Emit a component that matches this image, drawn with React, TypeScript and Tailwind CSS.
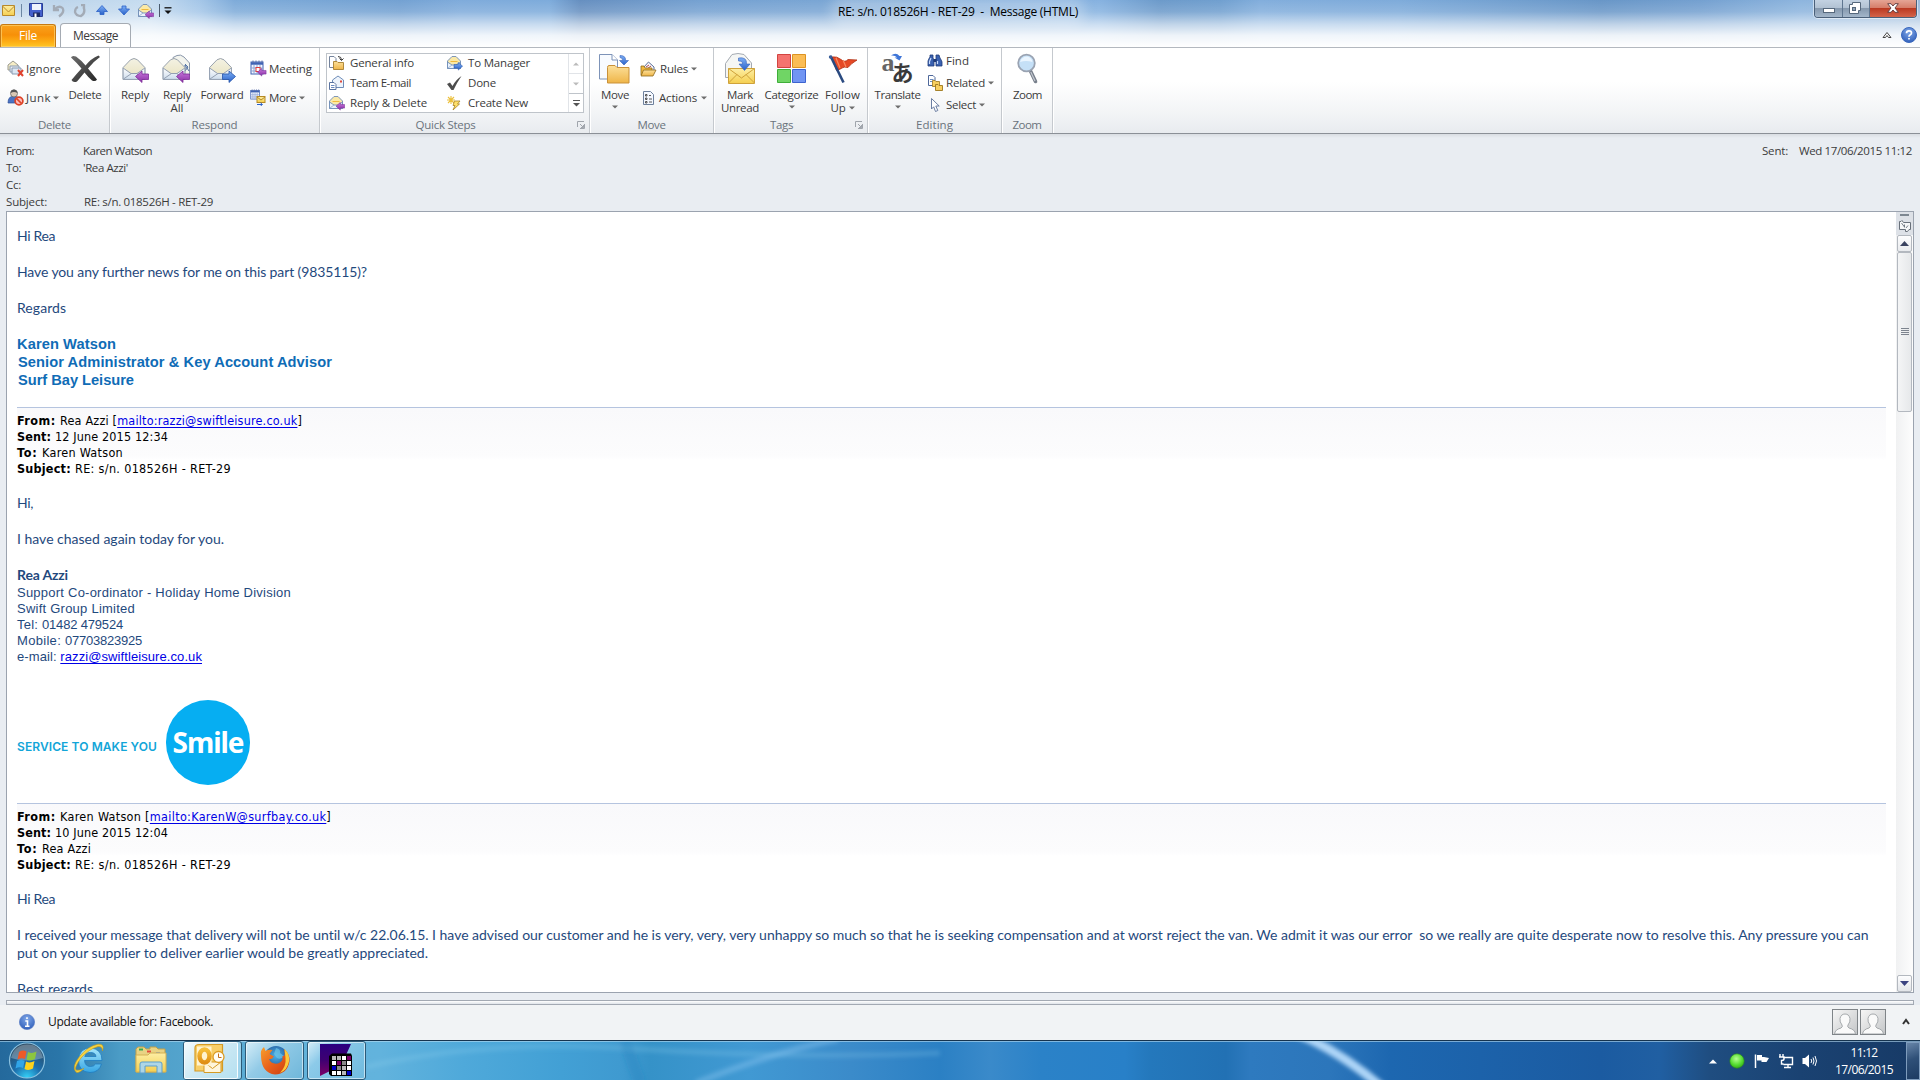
import React, { useLayoutEffect, useRef, useState } from "react";

/* Text whose tracking is adjusted so that the line takes exactly `w` pixels. */
function Fit({ w, className = "", children }: { w: number; className?: string; children: React.ReactNode }) {
  const ref = useRef<HTMLSpanElement>(null);
  const [gap, setGap] = useState(0);
  useLayoutEffect(() => {
    const el = ref.current;
    if (!el) return;
    el.style.letterSpacing = "0px";
    const natural = el.getBoundingClientRect().width;
    const n = (el.textContent || "").length || 1;
    const g = (w - natural) / n;
    el.style.letterSpacing = g + "px";
    setGap(g);
  }, [w]);
  return (
    <span ref={ref} className={"inline-block whitespace-pre " + className} style={{ letterSpacing: gap }}>
      {children}
    </span>
  );
}

const Svg = ({ w, h, vb, className = "", children }: { w: number; h: number; vb?: string; className?: string; children: React.ReactNode }) => (
  <svg width={w} height={h} viewBox={vb || `0 0 ${w} ${h}`} className={"block shrink-0 " + className} fill="none">
    {children}
  </svg>
);

const Defs = () => (
  <svg width="0" height="0" className="absolute">
    <defs>
      <linearGradient id="gFolder" x1="0" y1="0" x2="0" y2="1"><stop offset="0" stopColor="#fce09a" /><stop offset="1" stopColor="#efb548" /></linearGradient>
      <linearGradient id="gBlue" x1="0" y1="0" x2="0" y2="1"><stop offset="0" stopColor="#7fb0f5" /><stop offset="1" stopColor="#2a62c9" /></linearGradient>
      <linearGradient id="gPurple" x1="0" y1="0" x2="0" y2="1"><stop offset="0" stopColor="#c878dc" /><stop offset="1" stopColor="#8a2fa6" /></linearGradient>
      <linearGradient id="gEnv" x1="0" y1="0" x2="0" y2="1"><stop offset="0" stopColor="#ffffff" /><stop offset="1" stopColor="#cddcec" /></linearGradient>
      <linearGradient id="gPaper" x1="0" y1="0" x2="0" y2="1"><stop offset="0" stopColor="#f4f2e4" /><stop offset="1" stopColor="#e8e2bd" /></linearGradient>
      <linearGradient id="gYellow" x1="0" y1="0" x2="0" y2="1"><stop offset="0" stopColor="#fdeea4" /><stop offset="1" stopColor="#f5cf50" /></linearGradient>
      <linearGradient id="gX" x1="0" y1="0" x2="1" y2="1"><stop offset="0" stopColor="#6e6e6e" /><stop offset="1" stopColor="#222" /></linearGradient>
      <radialGradient id="gOrb" cx=".5" cy="1" r=".9"><stop offset="0" stopColor="#35d5fa" /><stop offset=".45" stopColor="#1b6fae" /><stop offset="1" stopColor="#2b4c66" /></radialGradient>
      <radialGradient id="gGreen" cx=".45" cy=".35" r=".7"><stop offset="0" stopColor="#b6ff92" /><stop offset=".6" stopColor="#55dc30" /><stop offset="1" stopColor="#2fa517" /></radialGradient>
      <radialGradient id="gHelp" cx=".5" cy=".3" r=".8"><stop offset="0" stopColor="#7fa7e8" /><stop offset="1" stopColor="#2757b5" /></radialGradient>
      <radialGradient id="gGlobe" cx=".5" cy=".4" r=".7"><stop offset="0" stopColor="#4fb3e8" /><stop offset="1" stopColor="#143f86" /></radialGradient>
      <linearGradient id="gFox" x1="0" y1="0" x2="1" y2="1"><stop offset="0" stopColor="#f8a02c" /><stop offset=".5" stopColor="#e8611c" /><stop offset="1" stopColor="#c93a10" /></linearGradient>
      <linearGradient id="gIe" x1="0" y1="0" x2="0" y2="1"><stop offset="0" stopColor="#a5e6fb" /><stop offset="1" stopColor="#35a5e4" /></linearGradient>
      <linearGradient id="gOut" x1="0" y1="0" x2="0" y2="1"><stop offset="0" stopColor="#f6bf3a" /><stop offset="1" stopColor="#e08f14" /></linearGradient>
      <linearGradient id="gApp" x1="0" y1="0" x2="0" y2="1"><stop offset="0" stopColor="#2b0080" /><stop offset=".5" stopColor="#3e0072" /><stop offset="1" stopColor="#7c0066" /></linearGradient>
    </defs>
  </svg>
);

const Caret = ({ className = "" }) => (
  <Svg w={6} h={4} className={className}><path d="M0 .5H6L3 3.5Z" fill="#6d6d6d" /></Svg>
);

/* 24x24 opened envelope, drawn at the origin */
const EnvShape = () => (
  <>
    <path d="M.6 10.500 8 2.800Q11.500.2 15 2.800L22.400 10.500V22.400H.6Z" fill="url(#gPaper)" stroke="#9aa3ad" strokeWidth="1" />
    <path d="M.6 11 8.500 16.500H14.500L22.400 11V22.400H.6Z" fill="url(#gEnv)" stroke="#94a0b2" strokeWidth="1" />
    <path d="M1 22 9 16.500M22 22 14 16.500" stroke="#94a0b2" strokeWidth="1" />
  </>
);
const ArrL = ({ x = 0, y = 0, s = 1 }) => (
  <path transform={`translate(${x} ${y}) scale(${s})`} d="M0 5.5 6.5 0V3H13V8.5H6.5V11.5Z" fill="url(#gPurple)" stroke="#7c2c98" strokeWidth=".8" />
);
const ArrR = ({ x = 0, y = 0, s = 1 }) => (
  <path transform={`translate(${x} ${y}) scale(${s})`} d="M13 5.5 6.5 0V3H0V8.5H6.5V11.5Z" fill="url(#gBlue)" stroke="#2553a8" strokeWidth=".8" />
);

const IReply = () => <Svg w={32} h={32}><g transform="translate(3.5 4)"><EnvShape /></g><ArrL x={16.5} y={18} /></Svg>;
const IReplyAll = () => (
  <Svg w={32} h={32}>
    <path d="M12 4.500 16 2.500Q19.500 1 23 4L28.500 10V22H14Z" fill="#f3f4ee" stroke="#8a97ab" />
    <path d="M24 11 27 14 24 18V12L28 18" stroke="#5776a6" strokeWidth="1" />
    <g transform="translate(1.5 4)"><EnvShape /></g><ArrL x={15.5} y={18} />
  </Svg>
);
const IForward = () => <Svg w={32} h={32}><g transform="translate(3 4)"><EnvShape /></g><ArrR x={16.5} y={18} /></Svg>;
const IDelete = () => (
  <Svg w={32} h={32}>
    <path d="M2 4.500Q3 2 7 3.500 12 7 16.500 12.500 22 5.500 29.500 2.500L31 4Q24.500 8.500 19 15.500 24 21.500 28 26.500 26.500 29 23 27.500 19 24 15.500 19.500 11 25 8 28.500 4 30 2.500 27 7 21.500 12.500 15.500 7 9 2 4.500Z" fill="url(#gX)" />
  </Svg>
);
const IIgnore = () => (
  <Svg w={17} h={17}>
    <path d="M1 5 6 1 11 5V10H1Z" fill="#f6edc6" stroke="#9a9a90" /><path d="M3 6H12V12H3Z" fill="#e9eff6" stroke="#8a9ab0" />
    <path d="M5 8H14V14H5Z" fill="#dbe6f3" stroke="#8a9ab0" /><path d="M11 10 16 16M16 10 11 16" stroke="#e0432f" strokeWidth="2" />
  </Svg>
);
const IJunk = () => (
  <Svg w={17} h={17}>
    <path d="M1 14Q1 7 7 7T12 14Z" fill="#4a73c4" stroke="#2b4e96" strokeWidth=".7" />
    <circle cx="7" cy="4.500" r="3.500" fill="#d9c8b4" stroke="#666" strokeWidth=".8" /><path d="M3.500 4Q4 .5 7 .6T10.500 4Q7 2 3.500 4Z" fill="#555" />
    <circle cx="12" cy="12" r="3.900" fill="#fbb" stroke="#dc4326" strokeWidth="1.700" /><path d="M9.500 9.500 14.500 14.500" stroke="#dc4326" strokeWidth="1.700" />
  </Svg>
);
const Cal = () => (
  <>
    <rect x="1" y="2" width="12" height="12" fill="#f4f8ff" stroke="#3f63b4" />
    <path d="M1 3.500H13" stroke="#3f63b4" strokeWidth="2.500" />
    <path d="M4 5V14M7 5V14M10 5V14M1 8H13M1 11H13" stroke="#8fa5d4" strokeWidth="1" />
    <path d="M3 .5V3M6 .5V3M9 .5V3M12 .5V3" stroke="#5a6fa8" />
  </>
);
const IMeeting = () => <Svg w={17} h={17}><Cal /><rect x="6" y="7.500" width="4" height="4" fill="#fff" stroke="#e03b3b" /><ArrL x={7.5} y={8.5} s={0.66} /></Svg>;
const IMore = () => (
  <Svg w={16} h={17}>
    <g transform="scale(.72)"><Cal /></g><rect x="7" y="7.500" width="8" height="6" fill="url(#gYellow)" stroke="#b58a26" /><path d="M7 8 11 11 15 8" stroke="#b58a26" />
    <path d="M7 15.500H12M10.500 13.800 12.500 15.500 10.500 17" stroke="#2a62c9" />
  </Svg>
);
const SmEnv = () => (
  <>
    <path d="M1.500 6 6 1.500H10L14.500 6V13.500H1.500Z" fill="#fbe9a6" stroke="#7f97b8" />
    <path d="M1.500 7 6 10H10L14.500 7V13.500H1.500Z" fill="#eaf2fb" stroke="#6f8db8" strokeWidth=".9" />
    <path d="M2 13 6 10M14 13 10 10" stroke="#8fa8cc" strokeWidth=".8" />
    <path d="M4.500 6.500H11.500" stroke="#f0b93c" />
  </>
);
const IGeneral = () => (
  <Svg w={17} h={16}><path d="M1.500 1.500H6L8 3.500V12.500H1.500Z" fill="#fff" stroke="#74839c" /><path d="M5.500 14.500V6.500H9L10 7.500H15.500V14.500Z" fill="url(#gFolder)" stroke="#a8802f" strokeWidth=".9" /><path d="M10 1.500Q13.500 1.500 13.500 5M11.500 3.500 13.500 5.500 15.500 3.500" stroke="#333" /></Svg>
);
const ITeam = () => (
  <Svg w={17} h={16}><path d="M4.500 5 10 1 15.500 5V12.500H4.500Z" fill="#eef4fc" stroke="#6f8db8" /><rect x="12" y="5.500" width="2" height="2" fill="#e04a3a" /><path d="M1.500 7.500H6L8 9.500V14.500H1.500Z" fill="#fff" stroke="#5a73a0" /><path d="M3 10.500H6.500M3 12.500H6.500" stroke="#6c8cc0" /></Svg>
);
const IReplyDel = () => <Svg w={17} h={16}><SmEnv /><ArrL x={8} y={7.5} s={0.66} /></Svg>;
const IToMgr = () => <Svg w={17} h={16}><SmEnv /><ArrR x={8} y={7.5} s={0.66} /></Svg>;
const IDone = () => <Svg w={17} h={16}><path d="M1 9 4 7.500 6.500 11Q10 4.500 15.500 1 11 7.500 7.500 15H5.500Z" fill="#4c4c4c" /></Svg>;
const ICreate = () => (
  <Svg w={17} h={16}><path d="M5 1V9M1 5H9M2 2 8 8M8 2 2 8" stroke="#ecc03c" strokeWidth="1.100" /><path d="M8.500 6H14L11.500 9H13.500L7 15 9 10.500H7Z" fill="#ffe06a" stroke="#a98322" strokeWidth=".8" /></Svg>
);
const IMove = () => (
  <Svg w={34} h={34}>
    <path d="M1.500 1.500H14L19.500 7V26H1.500Z" fill="#f8fbff" stroke="#7d93b8" /><path d="M14 1.500V7H19.500" fill="#fff" stroke="#7d93b8" />
    <path d="M9.500 30V14.500Q9.500 12.500 11 12.500H17L19 14.500H31V30Z" fill="url(#gFolder)" stroke="#c9913a" />
    <path d="M22 2.500Q28 2.500 27.500 7.500H30.500L26 12 21.500 7.500H24.500Q25 5 22 4.500Z" fill="url(#gBlue)" stroke="#3562bb" strokeWidth=".6" />
  </Svg>
);
const IRules = () => (
  <Svg w={17} h={16}><path d="M3 7 8.500 1 14 6V12H3Z" fill="#f6f6fb" stroke="#5a6e96" /><path d="M6 6 9 4M7 8 11 5" stroke="#b04a4a" /><path d="M1 5H4L5 7H12V14H1Z" fill="#f2b93f" stroke="#8e6a1d" strokeWidth=".8" /><path d="M3.500 9H16L13 15H1Z" fill="url(#gFolder)" stroke="#8e6a1d" strokeWidth=".8" /></Svg>
);
const IActions = () => (
  <Svg w={13} h={16}><path d="M1.500 1.500H8.500L11.500 4.500V14.500H1.500Z" fill="#f4f8ff" stroke="#6d809c" /><path d="M3.500 4.500H5V6H3.500ZM3.500 8H5V9.500H3.500ZM3.500 11.500H5V13H3.500ZM7 5.500H9M7 9H10M7 12H10" stroke="#444" strokeWidth=".9" /></Svg>
);
const IMark = () => (
  <Svg w={32} h={32}>
    <path d="M1.500 10.500 8 1.500Q14 -.5 20 1.500L27.500 10V24.500H1.500Z" fill="#f5f6f4" stroke="#a4aab2" />
    <path d="M4.500 15.500H30.500V30.500H4.500Z" fill="url(#gYellow)" stroke="#cfa23a" /><path d="M4.500 15.500 17.500 25 30.500 15.500M4.500 30 13 21.500M30.500 30 22 21.500" stroke="#cfa23a" />
    <path d="M14.500 5Q23 3.500 22.500 11H26L20.500 17.500 15 11H18.500Q19 8 14.500 8Z" fill="url(#gBlue)" stroke="#3562bb" strokeWidth=".6" />
  </Svg>
);
const ICat = () => (
  <Svg w={32} h={32}>
    <path d="M1.500 1.500H14.500V14.500H1.500Z" fill="#f4736f" stroke="#d24440" /><path d="M16.500 1.500H29.500V14.500H16.500Z" fill="#fbbd55" stroke="#dc9322" />
    <path d="M1.500 16.500H14.500V29.500H1.500Z" fill="#70d565" stroke="#3fae3a" /><path d="M16.500 16.500H29.500V29.500H16.500Z" fill="#7195f3" stroke="#3d63cf" />
  </Svg>
);
const IFlag = () => (
  <Svg w={32} h={32}>
    <path d="M4.500 4Q10 3 14 6.500T21 6.500L30 7Q24 10.500 21 14.500 17 13.500 15 15T9.500 17.500Z" fill="#e64a26" stroke="#b02f12" strokeWidth=".8" />
    <path d="M9 5 13 15M16 7 19 14" stroke="#f98a62" strokeWidth="1.200" />
    <path d="M3.500 3 16.500 29.500" stroke="#2a4a80" strokeWidth="2.600" /><circle cx="3.500" cy="4" r="1.700" fill="#3a5d98" />
  </Svg>
);
const ITranslate = () => (
  <div className="relative h-8 w-8 overflow-visible">
    <span className="absolute -top-[6px] left-0 font-['Liberation_Serif',serif] text-[26px] leading-[32px] font-bold text-[#666]">a</span>
    <span className="absolute top-[5px] left-[10px] font-['Noto_Sans_CJK_JP',sans-serif] text-[22px] leading-[26px] font-bold text-[#3a3a3a]">あ</span>
    <Svg w={12} h={8} className="absolute top-0 left-[9px]"><path d="M0 2.500Q5-1 8.500 3H11L8.500 7.500 3.500 4.500H6Q4 2 0 2.500Z" fill="#3f76d8" /></Svg>
  </div>
);
const IFind = () => (
  <Svg w={16} h={16}><path d="M3 2H6V5L7 7V13H1V8Q2 5 3 4ZM9 2H12L13 5Q15 8 15 9V13H9V7Z" fill="#3a61b0" stroke="#1f3b78" strokeWidth=".8" /><path d="M6.500 6H9.500V9H6.500Z" fill="#1f3b78" /><path d="M2.500 11V8.500L4 5M10.500 11V8" stroke="#c9dcff" strokeWidth="1.200" /></Svg>
);
const IRelated = () => (
  <Svg w={16} h={16}><path d="M1.500 .5H6L8 2.500V10.500H1.500Z" fill="#fff" stroke="#4f689a" /><path d="M3 4.500H6.500M3 6.500H6.500" stroke="#6c8cc0" /><path d="M5.500 5.500H8L9 6.500H12.500V11.500H5.500Z" fill="#f8cf5e" stroke="#9c761c" strokeWidth=".8" /><path d="M8.500 9.500H11L12 10.500H15.500V15.500H8.500Z" fill="#f8cf5e" stroke="#9c761c" strokeWidth=".9" /></Svg>
);
const ISelect = () => <Svg w={16} h={16}><path d="M4.500 1.500V12L6.700 9.800 8.500 14.500 10.800 13.500 8.800 9H12.200Z" fill="#fff" stroke="#5b7199" strokeWidth=".9" /></Svg>;
const IZoom = () => (
  <Svg w={32} h={32}>
    <path d="M18.500 18 23.500 28.500" stroke="#777f8b" strokeWidth="3.600" strokeLinecap="round" /><path d="M18.800 19 23 28" stroke="#c3c8d0" strokeWidth="1.200" />
    <circle cx="14.500" cy="10" r="8.300" fill="#c5e0f7" stroke="#9aa3b2" strokeWidth="1.800" /><path d="M8 9Q10 3 16 3.500 20 5 20.500 9 14 7 8 9Z" fill="#eaf5ff" />
  </Svg>
);
const Launcher = () => <Svg w={8} h={8}><path d="M.5 6V.5H7M7.500 3V7.500H3M3 3 6.500 6.500M6.500 4V6.500H4" stroke="#a0a5ac" /></Svg>;

function Big({ w, icon, children }: { w: string; icon: React.ReactNode; children: React.ReactNode }) {
  return (
    <div className={"flex shrink-0 flex-col items-center pt-[5px] " + w}>
      <div className="flex h-[35px] items-start">{icon}</div>
      <div className="flex flex-col items-center leading-[13px]">{children}</div>
    </div>
  );
}
function Row({ icon, w, label, caret, h = "h-[29px]", gap = "gap-[3px]" }: { icon: React.ReactNode; w: number; label: string; caret?: boolean; h?: string; gap?: string }) {
  return (
    <div className={`flex items-center ${h} ${gap}`}>
      {icon}
      <Fit w={w}>{label}</Fit>
      {caret && <Caret />}
    </div>
  );
}
function Group({ w, label, lw, launcher, labelShift = "", children }: { w: string; label: string; lw: number; launcher?: boolean; labelShift?: string; children: React.ReactNode }) {
  return (
    <div className={"relative flex h-[85px] shrink-0 flex-col border-r border-[#c5c9ce] shadow-[1px_0_0_#fff] " + w}>
      <div className="flex h-[68px]">{children}</div>
      <div className={"flex h-[17px] items-center justify-center text-[#6a737c] " + labelShift}><Fit w={lw}>{label}</Fit></div>
      {launcher && <div className="absolute right-[4px] bottom-[4px]"><Launcher /></div>}
    </div>
  );
}

const QS = [
  [{ i: <IGeneral />, t: "General info", w: 64 }, { i: <ITeam />, t: "Team E-mail", w: 61 }, { i: <IReplyDel />, t: "Reply & Delete", w: 77 }],
  [{ i: <IToMgr />, t: "To Manager", w: 62 }, { i: <IDone />, t: "Done", w: 28 }, { i: <ICreate />, t: "Create New", w: 60 }],
];

function TitleBar() {
  return (
    <div className="relative flex h-[47px] flex-col bg-[linear-gradient(180deg,rgba(255,255,255,0)_0%,rgba(255,255,255,.14)_25%,rgba(255,255,255,.58)_52%,rgba(255,255,255,.88)_75%,#fff_100%),linear-gradient(90deg,#c3d8ec_0px,#bdd5eb_60px,#c6dcf0_150px,#a4c6e8_200px,#7eabd9_235px,#73a1d2_400px,#7fabdb_460px,#7dabdb_550px,#668fc0_580px,#75a1d1_700px,#7ca8d6_900px,#86b2e0_1100px,#6c9aca_1160px,#709fcf_1220px,#82aedc_1260px,#7eabda_1400px,#6896c7_1600px,#74a0d0_1700px,#8db5de_1800px,#9bbadb_1920px)]">
      <div className="flex h-[24px] items-center">
        <div className="flex w-[190px] items-center pb-[2px]">
          <Svg w={14} h={12} className="ml-[2px]"><path d="M.5.5H12.500V10.500H.5Z" fill="url(#gYellow)" stroke="#b8892b" /><path d="M.5 1 6.500 7 12.500 1" stroke="#b8892b" /></Svg>
          <span className="ml-[5px] h-[13px] w-px bg-[#6d87a3]" />
          <Svg w={15} h={15} className="ml-[7px]"><path d="M.5.5H13.500V13.500H2L.5 12Z" fill="#4460cc" stroke="#2a3f94" /><path d="M3 1H12V7H3Z" fill="#eef3fc" /><path d="M4 9.500H11V14H4Z" fill="#1c2a66" /><path d="M5.500 10.500H7.500V14H5.500Z" fill="#fff" /></Svg>
          <Svg w={14} h={14} className="ml-[8px]"><path d="M2 1V6H7M2.500 5.500Q7 1 10.500 4 13 8 7 12.500" stroke="#a3abb6" strokeWidth="2.300" /></Svg>
          <Svg w={14} h={14} className="ml-[7px]"><path d="M8 1H11V5M10.500 3Q13 9 8 12 3 12 2 8 2 4 5 3" stroke="#a3abb6" strokeWidth="2.300" /></Svg>
          <Svg w={12} h={11} className="ml-[9px]"><path d="M6 .5 11.500 6.500H8V9.500H4V6.500H.5Z" fill="url(#gBlue)" stroke="#2a5fc8" strokeWidth=".8" /></Svg>
          <Svg w={12} h={11} className="ml-[10px]"><path d="M6 10 11.500 4H8V1H4V4H.5Z" fill="url(#gBlue)" stroke="#2a5fc8" strokeWidth=".8" /></Svg>
          <Svg w={17} h={16} className="ml-[7px]"><SmEnv /><ArrL x={8} y={8} s={0.66} /></Svg>
          <span className="ml-[5px] h-[13px] w-px bg-[#4a5a6c]" />
          <Svg w={8} h={8} className="ml-[4px]"><path d="M.5 .8H7.500" stroke="#111" strokeWidth="1.300" /><path d="M.5 3.500H7.500L4 7Z" fill="#111" /></Svg>
        </div>
        <div className="flex w-[1536px] justify-center">
          <span className="rounded-full bg-white/25 text-black shadow-[0_0_12px_8px_rgba(255,255,255,.25)]">
            <Fit w={240} className="text-[12px] leading-[14px]">RE: s/n. 018526H - RET-29  -  Message (HTML)</Fit>
          </span>
        </div>
        <div className="ml-auto mr-[3px] flex h-[18px] w-[103px] self-start overflow-hidden rounded-b-[4px] border border-t-0 border-[#4b6079] shadow-[0_0_0_1px_rgba(255,255,255,.5)]">
          <div className="flex w-[28px] items-end justify-center border-r border-[#5f7690] bg-[linear-gradient(180deg,#c3d2e2_0%,#b2c2d3_45%,#8699ae_50%,#a3b6ca_100%)] pb-[4px]">
            <Svg w={12} h={5}><rect x=".5" y=".5" width="11" height="4" fill="#fff" stroke="#56687c" /></Svg>
          </div>
          <div className="flex w-[27px] items-center justify-center border-r border-[#5f7690] bg-[linear-gradient(180deg,#c3d2e2_0%,#b2c2d3_45%,#8699ae_50%,#a3b6ca_100%)] pr-[2px] pb-[1px]">
            <Svg w={12} h={12}><path d="M3.500.5H11.500V8.500H9.500V11.500H.5V2.500H3.500Z" fill="#fff" stroke="#56687c" /><rect x="3.500" y="5.500" width="3" height="3" fill="#8fa3b8" stroke="#56687c" /></Svg>
          </div>
          <div className="flex flex-1 items-center justify-center bg-[linear-gradient(180deg,#e5a595_0%,#d67e6a_45%,#bb3a22_50%,#d4644a_100%)] pb-[1px]">
            <Svg w={12} h={10}><path d="M.7.700H4L6 3 8 .7H11.300L8 5 11.300 9.300H8L6 7 4 9.300H.7L4 5Z" fill="#fff" stroke="#5b3a3e" strokeWidth=".9" /></Svg>
          </div>
        </div>
      </div>
      <div className="flex h-[24px] shrink-0 items-end">
        <div className="flex h-[23px] w-[56px] items-center justify-center rounded-t-[3px] border border-b-0 border-[#c67a13] bg-[linear-gradient(180deg,#f9a21e_0%,#f79008_45%,#fdac14_75%,#ffc727_100%)] text-white shadow-[inset_0_0_0_1px_rgba(255,210,110,.7)]">
          <Fit w={18} className="text-[12px]">File</Fit>
        </div>
        <div className="ml-[4px] flex h-[24px] w-[71px] items-center justify-center rounded-t-[4px] border border-b-0 border-[#a5abb3] bg-white">
          <Fit w={45} className="text-[12px]">Message</Fit>
        </div>
        <div className="mr-[3px] mb-[4px] ml-auto flex items-center gap-[9px]">
          <Svg w={10} h={8}><path d="M1 6.500 5 1.500 9 6.500H6.500L5 4.500 3.500 6.500Z" fill="#fff" stroke="#444" /></Svg>
          <Svg w={16} h={16}><circle cx="8" cy="8" r="7.500" fill="url(#gHelp)" stroke="#3a68bd" /><path d="M5.500 6.200Q5.500 3.800 8 3.800T10.500 6Q10.500 7.200 9 8 8 8.600 8 9.800M8 11V12.600" stroke="#fff" strokeWidth="1.700" /></Svg>
        </div>
      </div>
    </div>
  );
}

function Ribbon() {
  return (
    <div className="flex h-[87px] border-t border-b border-t-[#b3b8bf] border-b-[#8b9097] bg-[linear-gradient(180deg,#fff_0%,#fff_40%,#f1f3f5_80%,#e8ebef_100%)] text-[11.5px] leading-[14px]">
      <Group w="w-[110px]" label="Delete" lw={33}>
        <div className="w-[62px] pt-[6px] pl-[7px]">
          <Row icon={<IIgnore />} w={35} label="Ignore" gap="gap-[2px]" />
          <Row icon={<IJunk />} w={25} label="Junk" caret gap="gap-[2px]" />
        </div>
        <Big w="w-[46px]" icon={<IDelete />}><Fit w={33}>Delete</Fit></Big>
      </Group>
      <Group w="w-[210px]" label="Respond" lw={46}>
        <Big w="w-[50px]" icon={<IReply />}><Fit w={28}>Reply</Fit></Big>
        <Big w="w-[34px]" icon={<IReplyAll />}><Fit w={28}>Reply</Fit><Fit w={13}>All</Fit></Big>
        <Big w="w-[56px]" icon={<IForward />}><Fit w={43}>Forward</Fit></Big>
        <div className="pt-[6px]">
          <Row icon={<IMeeting />} w={43} label="Meeting" gap="gap-[2px]" />
          <Row icon={<IMore />} w={27} label="More" caret gap="gap-[3px]" />
        </div>
      </Group>
      <Group w="w-[270px]" label="Quick Steps" lw={60} launcher labelShift="pr-[18px]">
        <div className="mt-[5px] ml-[6px] flex h-[60px] w-[258px] border border-[#bfc4ca] bg-white">
          {QS.map((col, k) => (
            <div key={k} className={k ? "-mt-[1px] w-[122px]" : "-mt-[1px] w-[119px] pl-[1px]"}>
              {col.map((q) => (
                <div key={q.t} className="flex h-[20px] items-center gap-[5px]">{q.i}<Fit w={q.w}>{q.t}</Fit></div>
              ))}
            </div>
          ))}
          <div className="flex w-[15px] flex-col border-l border-[#e1e4e8]">
            <div className="flex h-[20px] items-center justify-center border-b border-[#e1e4e8]"><Svg w={6} h={4}><path d="M0 3.500H6L3 .5Z" fill="#bbb" /></Svg></div>
            <div className="flex h-[19px] items-center justify-center"><Svg w={6} h={4}><path d="M0 .5H6L3 3.500Z" fill="#bbb" /></Svg></div>
            <div className="flex h-[19px] items-center justify-center border-t border-[#bfc4ca]"><Svg w={7} h={7}><path d="M0 .5H7" stroke="#555" /><path d="M0 3H7L3.500 6.500Z" fill="#555" /></Svg></div>
          </div>
        </div>
      </Group>
      <Group w="w-[124px]" label="Move" lw={28}>
        <Big w="w-[50px]" icon={<IMove />}><Fit w={28}>Move</Fit><Caret className="mt-[4px]" /></Big>
        <div className="flex flex-col pt-[6px]">
          <Row icon={<IRules />} w={28} label="Rules" caret gap="gap-[3px]" />
          <Row icon={<IActions />} w={38} label="Actions" caret gap="gap-[4px] pl-[2px]" />
        </div>
      </Group>
      <Group w="w-[154px]" label="Tags" lw={23} launcher labelShift="pr-[18px]">
        <Big w="w-[52px]" icon={<IMark />}><Fit w={26}>Mark</Fit><Fit w={38}>Unread</Fit></Big>
        <Big w="w-[51px]" icon={<ICat />}><Fit w={54}>Categorize</Fit><Caret className="mt-[4px]" /></Big>
        <Big w="w-[51px]" icon={<IFlag />}><Fit w={35}>Follow</Fit><span className="flex items-center gap-[3px]"><Fit w={15}>Up</Fit><Caret /></span></Big>
      </Group>
      <Group w="w-[134px]" label="Editing" lw={37}>
        <Big w="w-[59px]" icon={<ITranslate />}><Fit w={46}>Translate</Fit><Caret className="mt-[4px]" /></Big>
        <div className="pt-[2px]">
          <Row h="h-[22px]" icon={<IFind />} w={23} label="Find" gap="gap-[3px]" />
          <Row h="h-[22px]" icon={<IRelated />} w={39} label="Related" caret gap="gap-[3px]" />
          <Row h="h-[22px]" icon={<ISelect />} w={30} label="Select" caret gap="gap-[3px]" />
        </div>
      </Group>
      <Group w="w-[51px]" label="Zoom" lw={29}>
        <Big w="w-[51px]" icon={<IZoom />}><Fit w={29}>Zoom</Fit></Big>
      </Group>
    </div>
  );
}

function HeaderRow({ label, lw, value, vw = 0, pad = "w-[77px]" }: { label: string; lw: number; value?: string; vw?: number; pad?: string }) {
  return (
    <div className="flex h-[17px] items-center">
      <span className={pad}><Fit w={lw}>{label}</Fit></span>
      {value && <Fit w={vw}>{value}</Fit>}
    </div>
  );
}

const Link = ({ children }: { children: string }) => <span className="text-[#0000e6] underline underline-offset-2">{children}</span>;

function Quoted({ from, fw, link, date, to, tw }: { from: string; fw: number; link: string; date: string; to: string; tw: number }) {
  return (
    <div className="w-[1869px] border-t border-[#b5c4df] bg-[linear-gradient(180deg,#f9f9fb_0px,#fcfcfd_48px,#fff_52px)] pt-[5px] font-['DejaVu_Sans_Condensed','DejaVu_Sans',sans-serif] text-[12.5px] leading-[16px] text-black [font-stretch:condensed]">
      <div className="h-[16px]"><Fit w={43}><b>From: </b></Fit><Fit w={fw}>{from} [<Link>{link}</Link>]</Fit></div>
      <div className="h-[16px]"><Fit w={38}><b>Sent: </b></Fit><Fit w={113}>{date}</Fit></div>
      <div className="h-[16px]"><Fit w={25}><b>To: </b></Fit><Fit w={tw}>{to}</Fit></div>
      <div className="h-[16px]"><Fit w={58}><b>Subject: </b></Fit><Fit w={156}>RE: s/n. 018526H - RET-29</Fit></div>
    </div>
  );
}

const P = ({ w, children, bold }: { w: number; children: string; bold?: boolean }) => (
  <div className="h-[18px]"><Fit w={w} className={bold ? "font-bold" : ""}>{children}</Fit></div>
);
const Gap = () => <div className="h-[18px]" />;

function MessageBody() {
  return (
    <div className="ml-[6px] flex h-[782px] w-[1908px] overflow-hidden border border-[#9ba3af] bg-white">
      <div className="h-[780px] flex-1 overflow-hidden pt-[15px] pl-[10px] font-[Lato,sans-serif] text-[14px] leading-[18px] text-[#1f497d]">
        <P w={38}>Hi Rea</P><Gap />
        <P w={350}>Have you any further news for me on this part (9835115)?</P><Gap />
        <P w={49}>Regards</P><Gap />
        <div className="font-['Liberation_Sans',sans-serif] text-[14.67px] font-bold text-[#0f6cb6]">
          <div className="h-[18px]"><Fit w={99}>Karen Watson</Fit></div>
          <div className="h-[18px] pl-[1px]"><Fit w={314}>Senior Administrator & Key Account Advisor</Fit></div>
          <div className="h-[18px] pl-[1px]"><Fit w={116}>Surf Bay Leisure</Fit></div>
        </div>
        <Gap />
        <Quoted from="Rea Azzi" fw={242} link="mailto:razzi@swiftleisure.co.uk" date="12 June 2015 12:34" to="Karen Watson" tw={81} />
        <div className="h-[17px]" />
        <P w={16}>Hi,</P><Gap />
        <P w={207}>I have chased again today for you.</P><Gap />
        <P w={51} bold>Rea Azzi</P>
        <div className="pt-[1px] font-['Liberation_Sans',sans-serif] text-[13px] leading-[16px]">
          <div className="h-[16px]"><Fit w={274}>Support Co-ordinator - Holiday Home Division</Fit></div>
          <div className="h-[16px]"><Fit w={118}>Swift Group Limited</Fit></div>
          <div className="h-[16px]"><Fit w={25}>Tel: </Fit><Fit w={81}>01482 479524</Fit></div>
          <div className="h-[16px]"><Fit w={48}>Mobile: </Fit><Fit w={77}>07703823925</Fit></div>
          <div className="h-[16px]"><Fit w={185}>e-mail: <Link>razzi@swiftleisure.co.uk</Link></Fit></div>
        </div>
        <div className="flex h-[138px] pt-[35px]">
          <div className="w-[149px] pt-[38px] font-[Inter,sans-serif] text-[12px] leading-[18px] font-semibold text-[#12a5d8]"><Fit w={140}>SERVICE TO MAKE YOU</Fit></div>
          <div className="flex h-[85px] w-[84px] items-center justify-center rounded-full bg-[#06aef2] pb-[1px] font-['Noto_Sans',sans-serif] text-[28px] leading-[30px] font-bold text-white"><Fit w={71}>Smile</Fit></div>
        </div>
        <Quoted from="Karen Watson" fw={271} link="mailto:KarenW@surfbay.co.uk" date="10 June 2015 12:04" to="Rea Azzi" tw={49} />
        <div className="h-[17px]" />
        <P w={38}>Hi Rea</P><Gap />
        <P w={1852}>I received your message that delivery will not be until w/c 22.06.15. I have advised our customer and he is very, very, very unhappy so much so that he is seeking compensation and at worst reject the van. We admit it was our error  so we really are quite desperate now to resolve this. Any pressure you can</P>
        <P w={411}>put on your supplier to deliver earlier would be greatly appreciated.</P><Gap />
        <P w={76}>Best regards</P>
      </div>
      <div className="flex w-[17px] flex-col items-center bg-[linear-gradient(90deg,#f0f1f2,#fdfdfd)]">
        <div className="flex h-[23px] w-full flex-col items-center bg-[#dde1e7] pt-[2px]">
          <span className="h-[2px] w-[9px] bg-[#7d8791]" />
          <Svg w={12} h={13} className="mt-[4px]"><path d="M.5 1.500H2L3 .5 4.500 2.500H11.500V9.500H10L8.500 11.500H6.500V9.500H.5Z" fill="#f6f7f8" stroke="#68707a" /><path d="M2.500 3 5.500 7M5.500 4.500V7.500M9 5.500 7 8" stroke="#68707a" strokeWidth=".9" /></Svg>
        </div>
        <div className="flex h-[17px] w-[15px] shrink-0 items-center justify-center rounded-[2px] border border-[#b3b8bf] bg-[linear-gradient(180deg,#fdfdfe,#e9ebee)]"><Svg w={9} h={5}><path d="M0 5H9L4.500 0Z" fill="#3a4360" /></Svg></div>
        <div className="flex h-[160px] w-[15px] shrink-0 flex-col items-center justify-center gap-[1px] rounded-[2px] border border-[#b3b8bf] bg-[linear-gradient(90deg,#f4f5f6,#e6e8ea)] pb-[2px]">
          <span className="h-px w-[8px] bg-[#7d848e]" /><span className="h-px w-[8px] bg-[#7d848e]" /><span className="h-px w-[8px] bg-[#7d848e]" /><span className="h-px w-[8px] bg-[#7d848e]" />
        </div>
        <div className="flex-1" />
        <div className="flex h-[17px] w-[15px] shrink-0 items-center justify-center rounded-[2px] border border-[#b3b8bf] bg-[linear-gradient(180deg,#fdfdfe,#e2e5e9)]"><Svg w={9} h={5}><path d="M0 0H9L4.500 5Z" fill="#3a4380" /></Svg></div>
      </div>
    </div>
  );
}

const Avatar = () => (
  <div className="h-[26px] w-[26px] border border-[#7f8488] bg-[linear-gradient(135deg,#f6f6f6,#c4c6c8)]">
    <Svg w={24} h={24}><path d="M1.500 24Q2 19.500 8 18 10 17 9 15 6.500 12 7 8.500 8 4 12 4T17 8.500Q17.500 12 15 15 14 17 16 18 22 19.500 22.500 24Z" fill="#fafafa" stroke="#a5a9ac" /></Svg>
  </div>
);

const cells = ["#b9b9b9", "#b9b9b9", "#fff", "#7a0068", "#fff", "#7a0068", "#8a8a8a", "#fff", "#0000c8", "#8a8a8a", "#b9b9b9", "#fff", "#fff", "#fff", "#b9b9b9", "#0000c8"];

function TaskBar() {
  return (
    <div className="relative flex h-[40px] overflow-hidden border-t border-[#16344f] bg-[linear-gradient(90deg,#24699c_0px,#2a76a9_60px,#4b9cc6_120px,#62b2da_300px,#62b3dd_380px,#4fa9da_463px,#42a0d5_561px,#3f9ad0_620px,#3592c8_650px,#4199d3_749px,#3b8bca_851px,#2b80c4_940px,#3a8aca_990px,#2b82c8_1040px,#2880c8_1125px,#2478bc_1150px,#2271b4_1226px,#2e7abf_1250px,#2c76bb_1330px,#1d67b0_1390px,#1c62aa_1480px,#1b5ba1_1600px,#205fa2_1660px,#1f4d80_1710px,#1a4272_1800px,#173a66_1920px)]">
      <svg width="1920" height="39" className="absolute inset-0" fill="none">
        <defs><filter id="soft"><feGaussianBlur stdDeviation="2" /></filter></defs>
        <g filter="url(#soft)">
          <path d="M366 26Q480-2 640 8T940 12" stroke="#9bd4f2" strokeOpacity=".22" strokeWidth="5" />
          <path d="M696 42Q770 12 838-2" stroke="#8fc8f2" strokeOpacity=".4" strokeWidth="6" />
          <path d="M624-2 640 42" stroke="#1f7dbb" strokeOpacity=".25" strokeWidth="12" />
          <path d="M1296-8Q1340 10 1384 48" stroke="#b4dafb" strokeOpacity=".95" strokeWidth="9" />
        </g>
        <path d="M0 .5H1920" stroke="#b8dcf2" strokeOpacity=".6" />
      </svg>
      <div className="relative flex w-full items-start">
        <Svg w={38} h={38} className="mt-[1px] ml-[8px]">
          <circle cx="19" cy="18.500" r="17.500" fill="url(#gOrb)" stroke="#8cc2e0" strokeWidth="1.200" />
          <path d="M3 16Q6 3 19 2.500T35 16Q19 21 3 16Z" fill="#fff" fillOpacity=".28" />
          <path d="M11 10Q15 7.500 18.500 9.500L17 17Q13.500 15.500 9.500 17.500Z" fill="#ef5a28" /><path d="M20 10Q24 12 28.500 9.500L27 17Q22.500 19.500 18.500 17.500Z" fill="#8cc63f" />
          <path d="M9 19Q13 17 16.700 18.700L15 26Q11.500 24.500 7.500 26.500Z" fill="#30a5e8" /><path d="M18 19.500Q22 21.500 26.500 19L25 26.500Q20.500 29 16.500 27Z" fill="#fcd21c" />
        </Svg>
        <Svg w={34} h={34} className="mt-[1px] ml-[26px]">
          <path d="M30 18.500H12.500Q13 24.500 18.500 24.500 22 24.500 23.500 22H29.500Q27 30.500 18 30.500 6.500 30 6.500 18 7 6.500 18 6 30 6.500 30 18.500ZM12.800 14.500H24Q23.500 10.500 18.500 10.500T12.800 14.500Z" fill="url(#gIe)" stroke="#1f7cc0" strokeWidth=".8" />
          <path d="M4 30Q-1 25 8 14 16 4 26 2.200 33 1.500 30.500 9 30.500 4 26 4.500 17 7 9 16 2 25.500 4 28 7 29 12 26.500 6 32 4 30Z" fill="#f6d340" stroke="#c89a18" strokeWidth=".6" />
        </Svg>
        <Svg w={34} h={32} className="mt-[4px] ml-[28px]">
          <path d="M2 27V4L4 2H10L12 4H16V2H22L24 4H31V27Z" fill="#e9d384" stroke="#bfa04a" />
          <path d="M5 3.500H9V5.500H5Z" fill="#35a852" /><path d="M13 5.500H17V7.500H13Z" fill="#e34c3c" /><path d="M22 7.500H26V9.500H22Z" fill="#4a7fe0" />
          <path d="M2 10H14L16 8H32V27H2Z" fill="url(#gYellow)" stroke="#d3b154" /><path d="M6 28V19Q6 17 8 17H26Q28 17 28 19V28H23V21H11V28Z" fill="#a5d5f3" fillOpacity=".9" stroke="#5a9fce" />
        </Svg>
        <div className="ml-[15px] flex h-[39px] w-[59px] rounded-[3px] border border-[#2b5a78] bg-[#9fd4ec]">
          <div className="flex w-[54px] items-center justify-center rounded-[2px] border border-white/80 bg-[linear-gradient(135deg,#f2fafd_0%,#cde9f4_45%,#b5e0f0_100%)] pr-[4px] pb-[3px]">
            <Svg w={32} h={32}>
              <path d="M2 5Q2 1.500 6 1.500H29.500V28H2Z" fill="#f8cf68" stroke="#d59a24" strokeWidth="1.200" />
              <path d="M11 19H28V29.500H11Z" fill="#fff6dc" stroke="#d59a24" /><path d="M11 19 19.500 25.500 28 19" stroke="#d59a24" />
              <rect x="4" y="3.500" width="14.500" height="19" fill="#fff3cf" />
              <ellipse cx="11.500" cy="13" rx="5" ry="6.500" stroke="url(#gOut)" strokeWidth="4.500" />
              <circle cx="25.500" cy="14" r="5.500" fill="#fffdf6" stroke="#dc9b22" strokeWidth="1.300" /><path d="M25.500 10.500V14.500H28.500" stroke="#c2701a" />
            </Svg>
          </div>
        </div>
        <div className="ml-[3px] flex h-[39px] w-[59px] items-center justify-center rounded-[3px] border border-[#2b5a78] bg-[linear-gradient(135deg,#d5edf8_0%,#93cbe7_40%,#6fb7da_100%)] pb-[1px] shadow-[inset_0_0_0_1px_rgba(255,255,255,.55)]">
          <Svg w={32} h={32}>
            <circle cx="17" cy="14" r="12" fill="url(#gGlobe)" /><path d="M17 4Q22 5 21 9L25 12Q22 16 18 14L15 10Z" fill="#6cc5e8" fillOpacity=".7" />
            <path d="M2 12Q1 6 5 3L6.500 7Q10 5 13.500 6L10.500 10 15 12.500 12.500 15H10Q12 20.500 19 19.500 24.500 17.500 23.500 12 27 13 25 5 31 10 30.500 17 28.500 30 16 30.500 2.500 29 2 12Z" fill="url(#gFox)" />
            <path d="M25.500 5Q31 10 30 17.500 28.500 26 21 29 27.500 22 26.500 14Z" fill="#fcc93a" />
          </Svg>
        </div>
        <div className="ml-[3px] flex h-[39px] w-[59px] items-center justify-center rounded-[3px] border border-[#2b5a78] bg-[linear-gradient(135deg,#d5edf8_0%,#8ccae9_30%,#6fbade_100%)] pr-[1px] pb-[1px] shadow-[inset_0_0_0_1px_rgba(255,255,255,.55)]">
          <Svg w={32} h={32}>
            <path d="M0 0H31L26 11H10V27L0 32Z" fill="url(#gApp)" />
            <path d="M9 12 12 9.500H31L32 12V32H11L9 30Z" fill="#000" />
            {cells.map((c, i) => <rect key={i} x={12 + (i % 4) * 5} y={12 + Math.floor(i / 4) * 5} width="4" height="4" fill={c} />)}
          </Svg>
        </div>
        <div className="ml-auto flex h-[39px] items-center">
          <Svg w={8} h={5} className="mt-[1px]"><path d="M0 4.500H8L4 .5Z" fill="#fff" /></Svg>
          <Svg w={16} h={16} className="ml-[12px]"><circle cx="8" cy="8" r="7.200" fill="url(#gGreen)" stroke="#2d8a20" strokeWidth=".6" /></Svg>
          <Svg w={16} h={16} className="ml-[9px]"><path d="M1.500 1.500V15" stroke="#fff" strokeWidth="1.500" /><path d="M3 2H8V4H10L15 5 12.500 9H7.500V7.500H3Z" fill="#fff" /></Svg>
          <Svg w={16} h={16} className="ml-[8px]"><path d="M5 4.500H14.500V11.500H5.500M2 1V4M5 1V4M1 4H6V6Q6 7.500 3.500 7.500V11H5.500M10 11.500V14M6 14.500H13" stroke="#fff" strokeWidth="1.400" /></Svg>
          <Svg w={16} h={16} className="ml-[8px]"><path d="M.5 5H3L7 1.500V14.500L3 11H.5Z" fill="#fff" /><path d="M9 6Q10.500 8 9 10M11 4.500Q13 8 11 11.500M13 3Q16 8 13 13" stroke="#fff" /></Svg>
          <div className="ml-[17px] flex w-[58px] flex-col items-center text-[12px] leading-[17px] text-white"><Fit w={27}>11:12</Fit><Fit w={58}>17/06/2015</Fit></div>
          <div className="ml-[13px] h-[38px] w-[14px] border border-[#7e9cbd] bg-[linear-gradient(160deg,#6785a8_0%,#2f5078_45%,#1c3b62_100%)]" />
        </div>
      </div>
    </div>
  );
}

export default function App() {
  return (
    <div className="flex h-[1080px] w-[1920px] flex-col overflow-hidden bg-[#e9edf2] font-['Open_Sans',sans-serif] text-[11.5px] text-[#3b3b3b]">
      <Defs />
      <TitleBar />
      <Ribbon />
      <div className="flex h-[77px] justify-between bg-[linear-gradient(180deg,#d9dde2_0px,#e9edf2_4px)] pt-[8px] pr-[8px] pl-[6px] leading-[17px]">
        <div>
          <HeaderRow label="From:" lw={28} value="Karen Watson" vw={69} />
          <HeaderRow label="To:" lw={15} value="'Rea Azzi'" vw={45} />
          <HeaderRow label="Cc:" lw={15} />
          <HeaderRow label="Subject:" lw={41} value="RE: s/n. 018526H - RET-29" vw={129} pad="w-[78px]" />
        </div>
        <HeaderRow label="Sent:" lw={26} value="Wed 17/06/2015 11:12" vw={113} pad="w-[37px]" />
      </div>
      <MessageBody />
      <div className="h-[7px]" />
      <div className="ml-[6px] h-[5px] w-[1908px] border border-[#a3a9b3] bg-[linear-gradient(180deg,#fff,#dfe3e9)]" />
      <div className="flex h-[35px] items-center bg-[#f1f3f5] pr-[10px] pb-[2px] pl-[19px] text-[12px] leading-[15px] text-[#111]">
        <Svg w={16} h={16}><circle cx="8" cy="8" r="7.600" fill="url(#gHelp)" stroke="#5b7fc6" strokeWidth=".7" /><path d="M8 3.200V5M6.300 7H8.500V12M6 12.300H10.500" stroke="#fff" strokeWidth="1.600" /></Svg>
        <Fit w={165} className="ml-[13px]">Update available for: Facebook.</Fit>
        <div className="ml-auto flex gap-[2px]"><Avatar /><Avatar /></div>
        <Svg w={8} h={7} className="ml-[16px]"><path d="M1 6 4 2 7 6" stroke="#333" strokeWidth="2" /></Svg>
      </div>
      <TaskBar />
    </div>
  );
}
